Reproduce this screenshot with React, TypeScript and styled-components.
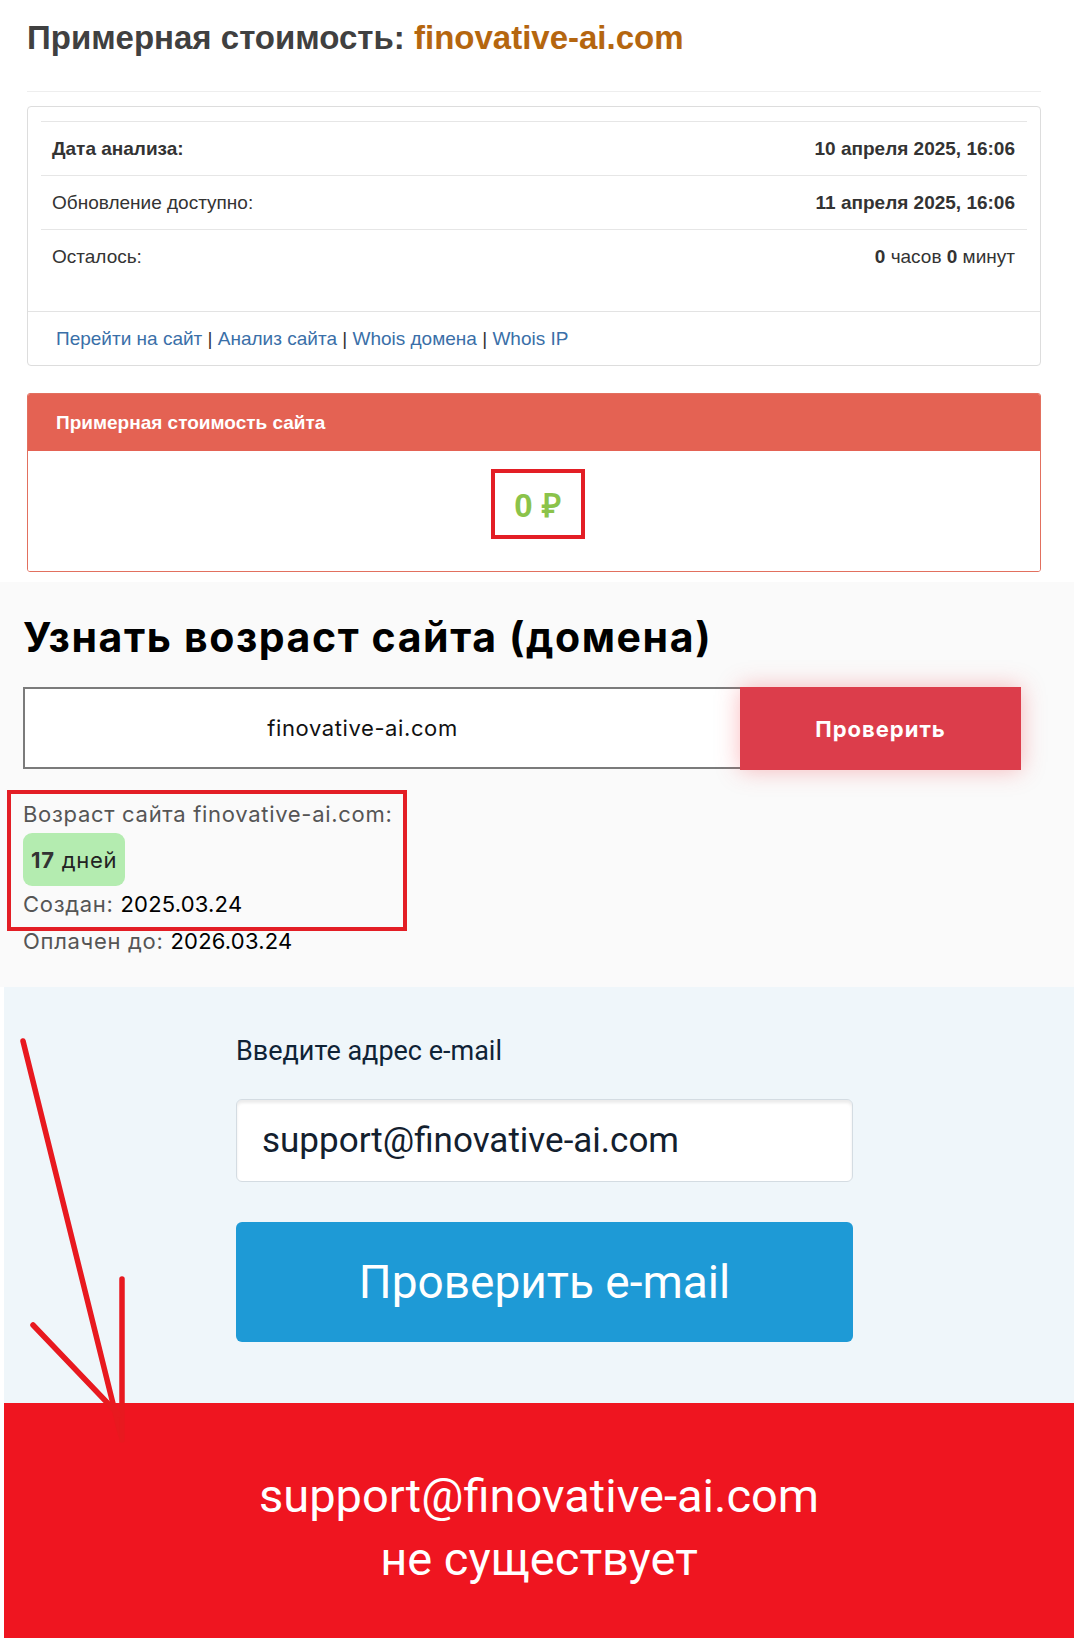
import styled, { createGlobalStyle } from "styled-components";

const GlobalStyle = createGlobalStyle`
  body {
    margin: 0;
    background: #fff;
  }
`;

const rows = [
  { label: "Дата анализа:", value: <b>10 апреля 2025, 16:06</b>, bold: true },
  { label: "Обновление доступно:", value: <b>11 апреля 2025, 16:06</b> },
  {
    label: "Осталось:",
    value: (
      <>
        <b>0</b> часов <b>0</b> минут
      </>
    ),
  },
];

const links = ["Перейти на сайт", "Анализ сайта", "Whois домена", "Whois IP"];

function App() {
  return (
    <Page>
      <GlobalStyle />

      <Top>
        <Title>
          Примерная стоимость: <Domain>finovative-ai.com</Domain>
        </Title>
        <Divider />

        <InfoCard>
          <InfoBody>
            {rows.map((row) => (
              <InfoRow key={row.label}>
                <RowLabel $bold={row.bold}>{row.label}</RowLabel>
                <span>{row.value}</span>
              </InfoRow>
            ))}
          </InfoBody>
          <InfoFooter>
            {links.map((link, i) => (
              <span key={link}>
                {i > 0 && <Sep>{" | "}</Sep>}
                <Link href="#">{link}</Link>
              </span>
            ))}
          </InfoFooter>
        </InfoCard>

        <PriceCard>
          <PriceHeader>Примерная стоимость сайта</PriceHeader>
          <PriceBody>
            <PriceBox>0 ₽</PriceBox>
          </PriceBody>
        </PriceCard>
      </Top>

      <AgeSection>
        <AgeTitle>Узнать возраст сайта (домена)</AgeTitle>
        <AgeForm>
          <AgeInput defaultValue="finovative-ai.com" />
          <AgeButton type="button">Проверить</AgeButton>
        </AgeForm>
        <AgeResult>
          <Highlight />
          <AgeLine>Возраст сайта finovative-ai.com:</AgeLine>
          <Badge>
            <b>17</b> дней
          </Badge>
          <AgeLine>
            Создан: <Dark>2025.03.24</Dark>
          </AgeLine>
        </AgeResult>
        <AgeLine>
          Оплачен до: <Dark>2026.03.24</Dark>
        </AgeLine>
      </AgeSection>

      <MailSection>
        <MailColumn>
          <MailLabel>Введите адрес e-mail</MailLabel>
          <MailInput defaultValue="support@finovative-ai.com" />
          <MailButton type="button">Проверить e-mail</MailButton>
        </MailColumn>
      </MailSection>

      <ResultBar>
        <div>support@finovative-ai.com</div>
        <div>не существует</div>
      </ResultBar>

      <Arrow width="140" height="420" viewBox="0 0 140 420">
        <g stroke="#e8191f" strokeWidth="5.5" strokeLinecap="round" fill="none">
          <line x1="23" y1="11" x2="121" y2="406" />
          <line x1="122" y1="249" x2="122" y2="410" />
          <line x1="33" y1="295" x2="119" y2="385" />
        </g>
      </Arrow>
    </Page>
  );
}

const Page = styled.div`
  position: relative;
  width: 1074px;
  font-family: "Liberation Sans", Arial, sans-serif;
`;

const Top = styled.div`
  padding: 0 33px 0 27px;
`;

const Title = styled.h1`
  margin: 0;
  padding-top: 18px;
  font-size: 33px;
  line-height: 40px;
  font-weight: bold;
  color: #404040;
`;

const Domain = styled.span`
  color: #b5660f;
`;

const Divider = styled.div`
  height: 1px;
  margin-top: 33px;
  background: #eeeeee;
`;

const InfoCard = styled.div`
  margin-top: 14px;
  border: 1px solid #dddddd;
  border-radius: 4px;
  background: #fff;
`;

const InfoBody = styled.div`
  padding: 14px 13px 28px;
`;

const InfoRow = styled.div`
  display: flex;
  justify-content: space-between;
  align-items: center;
  height: 53px;
  padding: 0 12px 0 11px;
  border-top: 1px solid #e6e6e6;
  font-size: 19px;
  color: #333;
`;

const RowLabel = styled.span<{ $bold?: boolean }>`
  font-weight: ${(p) => (p.$bold ? "bold" : "normal")};
`;

const InfoFooter = styled.div`
  height: 53px;
  padding-left: 28px;
  border-top: 1px solid #e3e3e3;
  font-size: 19px;
  line-height: 53px;
  white-space: pre;
`;

const Link = styled.a`
  color: #3a6fa8;
  text-decoration: none;
`;

const Sep = styled.span`
  color: #333;
`;

const PriceCard = styled.div`
  margin-top: 27px;
  border: 1px solid #e2705f;
  border-radius: 3px;
  overflow: hidden;
`;

const PriceHeader = styled.div`
  display: flex;
  align-items: center;
  height: 57px;
  padding-left: 28px;
  background: #e46253;
  color: #fff;
  font-size: 19px;
  font-weight: bold;
`;

const PriceBody = styled.div`
  display: flex;
  justify-content: center;
  align-items: flex-start;
  height: 120px;
  padding-top: 18px;
  box-sizing: border-box;
  background: #fff;
`;

const PriceBox = styled.div`
  display: flex;
  align-items: center;
  justify-content: center;
  width: 94px;
  height: 70px;
  margin-left: 7px;
  box-sizing: border-box;
  border: 4px solid #e31e25;
  color: #8bc34a;
  font-size: 33px;
  font-weight: bold;
`;

const AgeSection = styled.div`
  margin-top: 10px;
  padding: 30px 53px 27px 23px;
  background: #fafafa;
  font-family: Inter, "Noto Sans", sans-serif;
`;

const AgeTitle = styled.h2`
  margin: 0;
  font-size: 41px;
  line-height: 50px;
  font-weight: 700;
  color: #000;
  letter-spacing: 1.6px;
`;

const AgeForm = styled.div`
  display: flex;
  margin-top: 25px;
`;

const AgeInput = styled.input`
  width: 717px;
  height: 82px;
  box-sizing: border-box;
  padding: 0 40px 0 0;
  border: 2px solid #7b7b7b;
  border-right: none;
  background: #fff;
  text-align: center;
  font-family: Inter, sans-serif;
  font-size: 22px;
  letter-spacing: 0.6px;
  color: #111;
  outline: none;
`;

const AgeButton = styled.button`
  width: 281px;
  height: 83px;
  border: none;
  background: #dc3d4b;
  color: #fff;
  font-family: Inter, sans-serif;
  font-size: 22px;
  font-weight: 700;
  letter-spacing: 1px;
  box-shadow: 0 0 22px rgba(240, 60, 70, 0.35);
`;

const AgeResult = styled.div`
  position: relative;
  width: fit-content;
  margin-top: 26px;
`;

const Highlight = styled.div`
  position: absolute;
  top: -6px;
  bottom: -8px;
  left: -16px;
  right: -15px;
  border: 4px solid #e31e25;
  pointer-events: none;
`;

const AgeLine = styled.div`
  font-size: 22px;
  line-height: 37px;
  letter-spacing: 0.7px;
  color: #555;
`;

const Dark = styled.span`
  color: #000;
  letter-spacing: 0.2px;
`;

const Badge = styled.div`
  display: inline-flex;
  align-items: center;
  height: 53px;
  padding: 0 8px;
  border-radius: 9px;
  background: #b4ecb0;
  font-size: 22px;
  letter-spacing: 0.7px;
  color: #222;

  b {
    margin-right: 7px;
    color: #333;
  }
`;

const MailSection = styled.div`
  margin-left: 4px;
  padding: 46px 0 61px 232px;
  background: #eff6fa;
  font-family: Roboto, "Noto Sans", sans-serif;
`;

const MailColumn = styled.div`
  display: flex;
  flex-direction: column;
  width: 617px;
`;

const MailLabel = styled.div`
  font-size: 27px;
  line-height: 36px;
  color: #0f2336;
`;

const MailInput = styled.input`
  height: 83px;
  margin-top: 30px;
  box-sizing: border-box;
  padding: 0 25px;
  border: 1px solid #d4dce2;
  border-radius: 6px;
  background: #fff;
  box-shadow: inset 0 3px 3px rgba(0, 0, 0, 0.08);
  font-family: Roboto, sans-serif;
  font-size: 35px;
  color: #13202e;
  outline: none;
`;

const MailButton = styled.button`
  height: 120px;
  margin-top: 40px;
  border: none;
  border-radius: 6px;
  background: #1e9ad6;
  color: #fff;
  font-family: Roboto, sans-serif;
  font-size: 46px;
`;

const ResultBar = styled.div`
  margin-left: 4px;
  padding: 61px 0 48px;
  background: #ef1520;
  color: #fff;
  text-align: center;
  font-family: Roboto, sans-serif;
  font-size: 47px;
  line-height: 63px;
`;

const Arrow = styled.svg`
  position: absolute;
  top: 1030px;
  left: 0;
`;

export default App;
